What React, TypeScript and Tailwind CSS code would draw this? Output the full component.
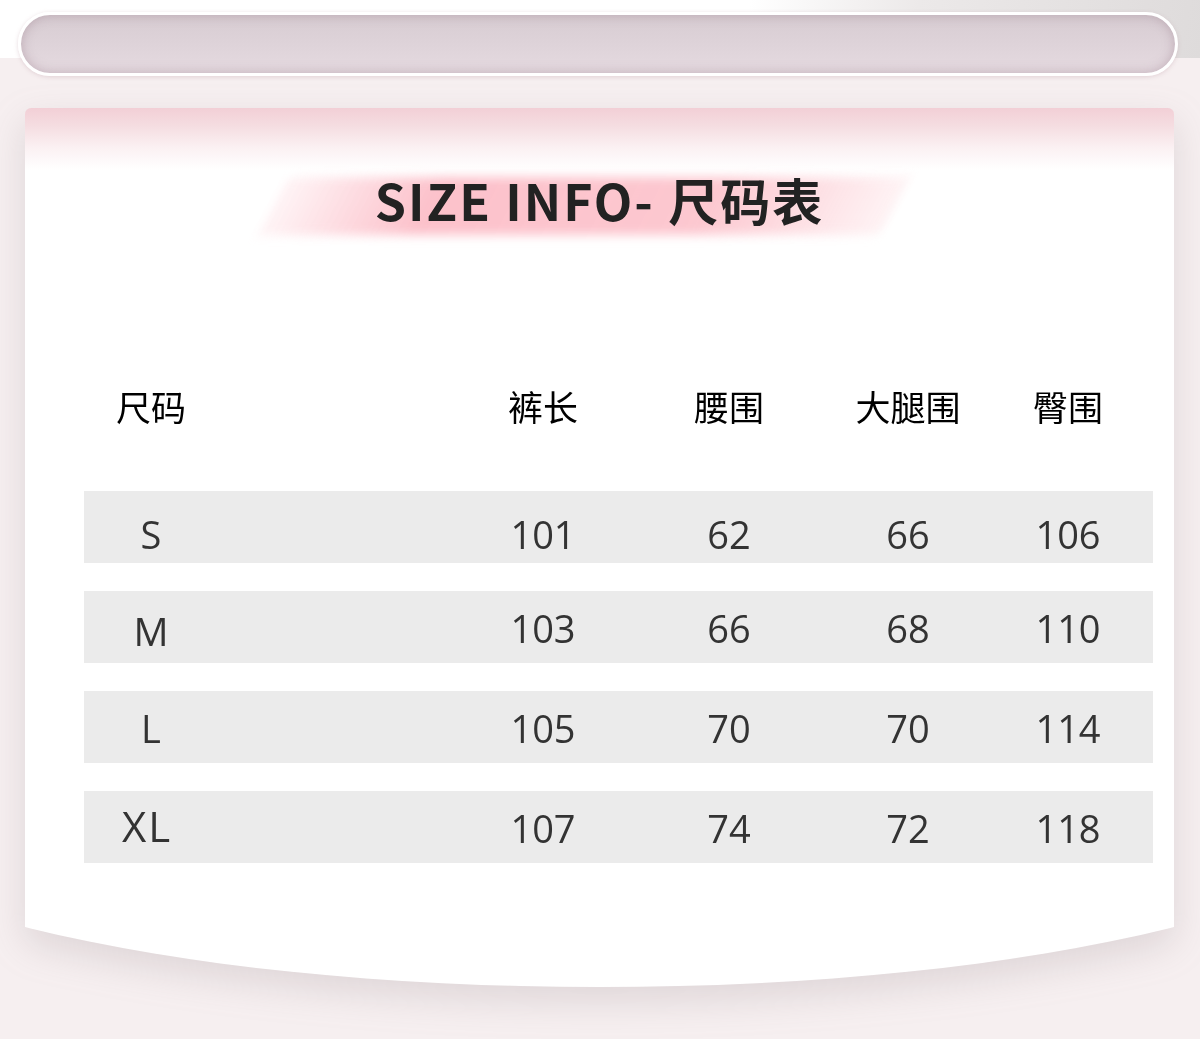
const headers = ["尺码", "裤长", "腰围", "大腿围", "臀围"];

const rows = [
  { size: "S", values: ["101", "62", "66", "106"], pad: "pt-[14px]", label: "text-[38px]" },
  { size: "M", values: ["103", "66", "68", "110"], pad: "pt-[2px]", label: "text-[39px] pt-[6px]" },
  { size: "L", values: ["105", "70", "70", "114"], pad: "pt-[2px]", label: "text-[38px]" },
  { size: "XL", values: ["107", "74", "72", "118"], pad: "pt-[2px]", label: "text-[42px] tracking-[2px] pr-[8px] -mt-[4px]" },
];

const cols = "grid grid-cols-[134px_232px_186px_186px_172px_148px]";

const SizeInfo = () => {
  return (
    <div className="w-[1200px] h-[1039px] relative overflow-hidden bg-[#f6eff0] font-['Open_Sans','Noto_Sans_CJK_SC',sans-serif]">
      {/* top strip with grey wash at the right */}
      <div className="absolute top-0 left-0 w-full h-[58px] bg-[linear-gradient(100deg,#ffffff_0%,#ffffff_62%,#ece9e9_76%,#dedbdb_100%)]" />

      <div className="relative pt-[12px] px-[18px]">
        <div className="h-[64px] w-[1160px] rounded-full border-[3px] border-white bg-[linear-gradient(to_bottom,#d7ccd2,#e5dae0)] shadow-[inset_0_0_12px_rgba(140,110,125,0.4),0_1px_4px_rgba(200,170,180,0.45)]" />
      </div>

      <div className="relative mt-[32px] ml-[25px] w-[1149px] drop-shadow-[0_14px_18px_rgba(130,115,118,0.2)]">
        <div className="h-[819px] rounded-t-[6px] bg-[linear-gradient(to_bottom,#f2cfd6_0px,#f5dde1_18px,#fbf1f3_40px,#ffffff_62px)] pt-[63px]">
          <div className="relative h-[56px] flex justify-center">
            <div className="absolute top-[6px] left-[248px] w-[622px] h-[58px] -skew-x-[28deg] blur-[5px] bg-[linear-gradient(to_right,rgba(253,214,220,0.25),rgba(252,190,200,0.95)_25%,rgba(252,194,203,0.9)_70%,rgba(253,222,226,0.35))]" />
            <h2 className="relative text-[50px] leading-[56px] font-bold tracking-[2px] text-[#222] font-['Noto_Sans_CJK_SC',sans-serif]">
              SIZE INFO- 尺码表
            </h2>
          </div>

          <div className={`${cols} ml-[59px] w-[1069px] mt-[155px] h-[48px] items-center`}>
            {headers.map((h, i) => (
              <span key={h} className={`text-center text-[35px] leading-[48px] text-black font-['Noto_Sans_CJK_SC',sans-serif] ${i === 0 ? "col-start-1" : ""} ${i === 1 ? "col-start-3" : ""}`}>
                {h}
              </span>
            ))}
          </div>

          <div className="ml-[59px] w-[1069px] mt-[61px] flex flex-col gap-[28px]">
            {rows.map((r) => (
              <div key={r.size} className={`${cols} h-[72px] bg-[#ebebeb] items-center ${r.pad}`}>
                <span className={`text-center leading-[44px] text-[#333] ${r.label}`}>{r.size}</span>
                {r.values.map((v, i) => (
                  <span key={i} className={`text-center text-[38px] leading-[44px] text-[#333] ${i === 0 ? "col-start-3" : ""}`}>
                    {v}
                  </span>
                ))}
              </div>
            ))}
          </div>
        </div>
        <div className="h-[60px] bg-white [clip-path:ellipse(70%_200px_at_50%_-140px)]" />
      </div>
    </div>
  );
};

export default function App() {
  return <SizeInfo />;
}
